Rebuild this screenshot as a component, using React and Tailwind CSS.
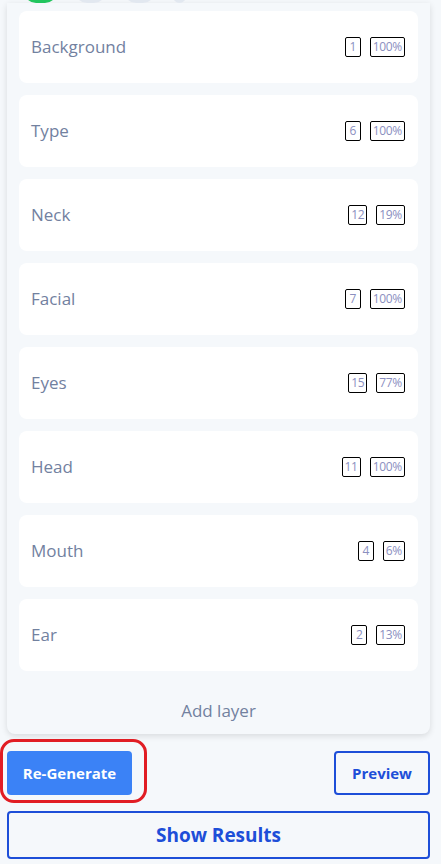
const LAYERS = [
  { name: 'Background', count: 1, pct: '100%' },
  { name: 'Type', count: 6, pct: '100%' },
  { name: 'Neck', count: 12, pct: '19%' },
  { name: 'Facial', count: 7, pct: '100%' },
  { name: 'Eyes', count: 15, pct: '77%' },
  { name: 'Head', count: 11, pct: '100%' },
  { name: 'Mouth', count: 4, pct: '6%' },
  { name: 'Ear', count: 2, pct: '13%' },
]

function Badge({ children }) {
  return (
    <span className="h-5 min-w-4 px-[2px] flex items-center justify-center border border-black rounded-[2px] text-[12px] leading-none text-[#8b8fbf] tracking-[-0.3px]">
      {children}
    </span>
  )
}

function LayerCard({ layer }) {
  return (
    <div className="h-[72px] bg-white rounded-lg pl-3 pr-[13px] flex items-center justify-between">
      <span className="text-[17px] text-[#72819f]">{layer.name}</span>
      <div className="flex items-center gap-[9px]">
        <Badge>{layer.count}</Badge>
        <Badge>{layer.pct}</Badge>
      </div>
    </div>
  )
}

export default function App() {
  return (
    <div className="w-[441px] min-h-screen bg-[#f5f8fb] overflow-hidden" style={{ fontFamily: '"Open Sans", "Noto Sans", sans-serif' }}>
      {/* tabs, scrolled mostly out of view */}
      <div className="flex items-end mt-[-21px] pl-6 gap-[18px]">
        <div className="w-[33px] h-6 rounded-full bg-[#22c55e]" />
        <div className="w-[31px] h-6 rounded-full bg-[#e2e8f0]" />
        <div className="w-[31px] h-6 rounded-full bg-[#e2e8f0]" />
        <div className="w-[13px] h-6 rounded-full bg-[#e2e8f0]" />
      </div>

      {/* layers panel */}
      <div className="ml-[7px] mr-[11px] bg-[#f5f8fb] rounded-b-lg shadow-[0_2px_6px_rgba(0,0,0,0.12)] px-3 pt-2">
        <div className="flex flex-col gap-3">
          {LAYERS.map((l) => (
            <LayerCard key={l.name} layer={l} />
          ))}
        </div>
        <div className="pt-[28px] pb-[11px] text-center text-[17px] leading-6 text-[#72819f]">Add layer</div>
      </div>

      {/* actions */}
      <div className="relative mt-[17px] pl-[7px] pr-[11px] flex items-center justify-between">
        <div className="absolute left-0 top-[-12px] w-[147px] h-[64px] border-[3px] border-[#e11d24] rounded-[14px]" />
        <button className="w-[125px] h-11 rounded bg-[#3b82f6] text-white text-[15px] font-bold">Re-Generate</button>
        <button className="w-24 h-11 rounded border-2 border-[#1d4ed8] text-[#1d4ed8] text-[15px] font-bold">Preview</button>
      </div>
      <div className="pl-[7px] pr-[11px] mt-4">
        <button className="w-full h-12 rounded border-2 border-[#1d4ed8] text-[#1d4ed8] text-[19px] font-bold">Show Results</button>
      </div>
    </div>
  )
}
